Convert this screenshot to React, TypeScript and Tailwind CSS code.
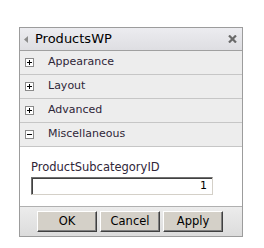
import React from "react";

const font = { fontFamily: '"DejaVu Sans", Verdana, sans-serif' };

function Box({ open }: { open?: boolean }) {
  return (
    <svg width="9" height="9" viewBox="0 0 9 9" className="shrink-0">
      <rect x="0.5" y="0.5" width="8" height="8" fill="#fff" stroke="#8a8a8a" />
      <rect x="2" y="4" width="5" height="1" fill="#000" />
      {!open && <rect x="4" y="2" width="1" height="5" fill="#000" />}
    </svg>
  );
}

function Row({ label, open }: { label: string; open?: boolean }) {
  return (
    <div className="flex h-[24px] items-center border-b border-[#c6c6c6] bg-[#ededed] pl-[5px]">
      <Box open={open} />
      <span className="ml-[14px] text-[11px] text-[#2f2638]">{label}</span>
    </div>
  );
}

function Btn({ children }: { children: React.ReactNode }) {
  return (
    <button className="flex h-[21px] w-[60px] items-center justify-center border border-t-white border-l-white border-b-[#404040] border-r-[#404040] bg-[#d4d0c8] text-[11.5px] text-black shadow-[inset_-1px_-1px_0_#808080]">
      {children}
    </button>
  );
}

export default function App() {
  return (
    <div className="h-[248px] w-[264px] bg-white pl-[19px] pt-[27px]" style={font}>
      <div className="flex h-[210px] w-[224px] flex-col border border-[#9c9c9c]">
        <div className="flex h-[23px] items-center border-b border-[#a0a0a0] bg-gradient-to-b from-[#ececf0] to-[#dedee2] pl-[4px] pr-[5px]">
          <svg width="4" height="7" viewBox="0 0 4 7" className="shrink-0">
            <polygon points="4,0 0,3.5 4,7" fill="#8c8c8c" />
          </svg>
          <span className="ml-[7px] text-[13px] text-black">ProductsWP</span>
          <svg width="9" height="8" viewBox="0 0 9 8" className="ml-auto">
            <path d="M1 0.5 L8 7.5 M8 0.5 L1 7.5" stroke="#6a6a6a" strokeWidth="2.2" />
          </svg>
        </div>
        <Row label="Appearance" />
        <Row label="Layout" />
        <Row label="Advanced" />
        <Row label="Miscellaneous" open />
        <div className="flex h-[60px] flex-col border-b border-[#b0b0b0] bg-white pl-[11px] pt-[13px]">
          <span className="text-[11.5px] leading-[14px] text-[#2f2638]">ProductSubcategoryID</span>
          <div className="mt-[3px] flex h-[18px] w-[182px] items-center justify-end border border-t-[#707070] border-l-[#707070] border-b-[#d4d0c8] border-r-[#d4d0c8] pr-[5px] text-[11px] text-black shadow-[inset_1px_1px_0_#404040]">
            1
          </div>
        </div>
        <div className="flex flex-1 items-start gap-[3px] bg-gradient-to-b from-[#ececec] to-[#dcdcdc] pl-[17px] pt-[4px]">
          <Btn>OK</Btn>
          <Btn>Cancel</Btn>
          <Btn>Apply</Btn>
        </div>
      </div>
    </div>
  );
}
